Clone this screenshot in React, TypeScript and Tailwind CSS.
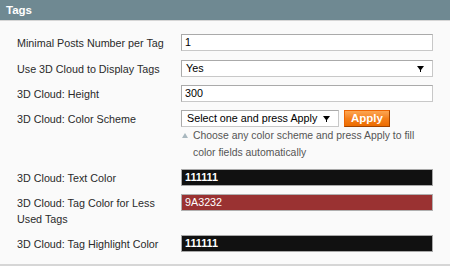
import React from "react";

const Arrow = () => (
  <svg width="7" height="6" viewBox="0 0 7 6" className="block">
    <polygon points="0,0 7,0 4,4 3,4" fill="#000" />
    <rect x="3" y="4" width="1" height="2" fill="#000" />
  </svg>
);

const inputBase =
  "h-[17px] border border-t-[#aaaaaa] border-l-[#aaaaaa] border-r-[#c8c8c8] border-b-[#c8c8c8] bg-white pl-[3px] leading-[15px] text-[10.75px] text-black";

function Label({ children }: { children: React.ReactNode }) {
  return (
    <div className="w-[164px] shrink-0 pt-[1px] leading-[16px] text-[10.75px] text-[#2a2a2a]">
      {children}
    </div>
  );
}

export default function App() {
  return (
    <div className="w-[450px] h-[266px] bg-white font-['Liberation_Sans',Arial,sans-serif]">
      <div className="h-[20px] bg-[#6f8992] pl-[6px] text-[11.5px] font-bold leading-[20px] text-white">
        Tags
      </div>
      <div className="h-[246px] border-t border-b-2 border-[#d6d6d6] bg-[#fafafa] pl-[17px] pt-[13px] flex flex-col">
        <div className="flex pb-[9px]">
          <Label>Minimal Posts Number per Tag</Label>
          <div className={`${inputBase} w-[252px]`}>1</div>
        </div>
        <div className="flex pb-[8px]">
          <Label>Use 3D Cloud to Display Tags</Label>
          <div className={`${inputBase} h-[16px] leading-[14px] w-[252px] flex items-center justify-between pr-[8px] pl-[4px]`}>
            <span>Yes</span>
            <Arrow />
          </div>
        </div>
        <div className="flex pb-[8px]">
          <Label>3D Cloud: Height</Label>
          <div className={`${inputBase} w-[252px]`}>300</div>
        </div>
        <div className="flex pb-[8px]">
          <Label>3D Cloud: Color Scheme</Label>
          <div className="w-[252px]">
            <div className="flex items-start gap-[5px]">
              <div className={`${inputBase} h-[16px] leading-[14px] w-[158px] flex items-center justify-between pr-[8px] pl-[5px]`}>
                <span>Select one and press Apply</span>
                <Arrow />
              </div>
              <button className="h-[17px] w-[46px] border border-t-[#ed6502] border-l-[#ed6502] border-r-[#a04300] border-b-[#a04300] bg-gradient-to-b from-[#fca651] via-[#f5801a] to-[#ec6c00] text-[11.5px] font-bold leading-[15px] text-white">
                Apply
              </button>
            </div>
            <div className="flex">
              <div className="w-[12px] shrink-0 pl-[1px] pt-[6px]">
                <svg width="6" height="5" viewBox="0 0 6 5" className="block">
                  <polygon points="3,0 6,5 0,5" fill="#a9b8bf" />
                </svg>
              </div>
              <div className="text-[10.4px] leading-[17px] text-[#555555]">
                Choose any color scheme and press Apply to fill color fields automatically
              </div>
            </div>
          </div>
        </div>
        <div className="flex pb-[8px]">
          <Label>3D Cloud: Text Color</Label>
          <div className="h-[17px] w-[252px] border border-[#a8a8a8] bg-[#111111] pl-[3px] leading-[15px] text-[10.75px] font-bold text-white">
            111111
          </div>
        </div>
        <div className="flex pb-[8px]">
          <Label>3D Cloud: Tag Color for Less Used Tags</Label>
          <div className="h-[17px] w-[252px] border border-[#b0b0b0] bg-[#9a3232] pl-[3px] leading-[15px] text-[10.75px] text-white">
            9A3232
          </div>
        </div>
        <div className="flex">
          <Label>3D Cloud: Tag Highlight Color</Label>
          <div className="h-[17px] w-[252px] border border-[#a8a8a8] bg-[#111111] pl-[3px] leading-[15px] text-[10.75px] font-bold text-white">
            111111
          </div>
        </div>
      </div>
    </div>
  );
}
